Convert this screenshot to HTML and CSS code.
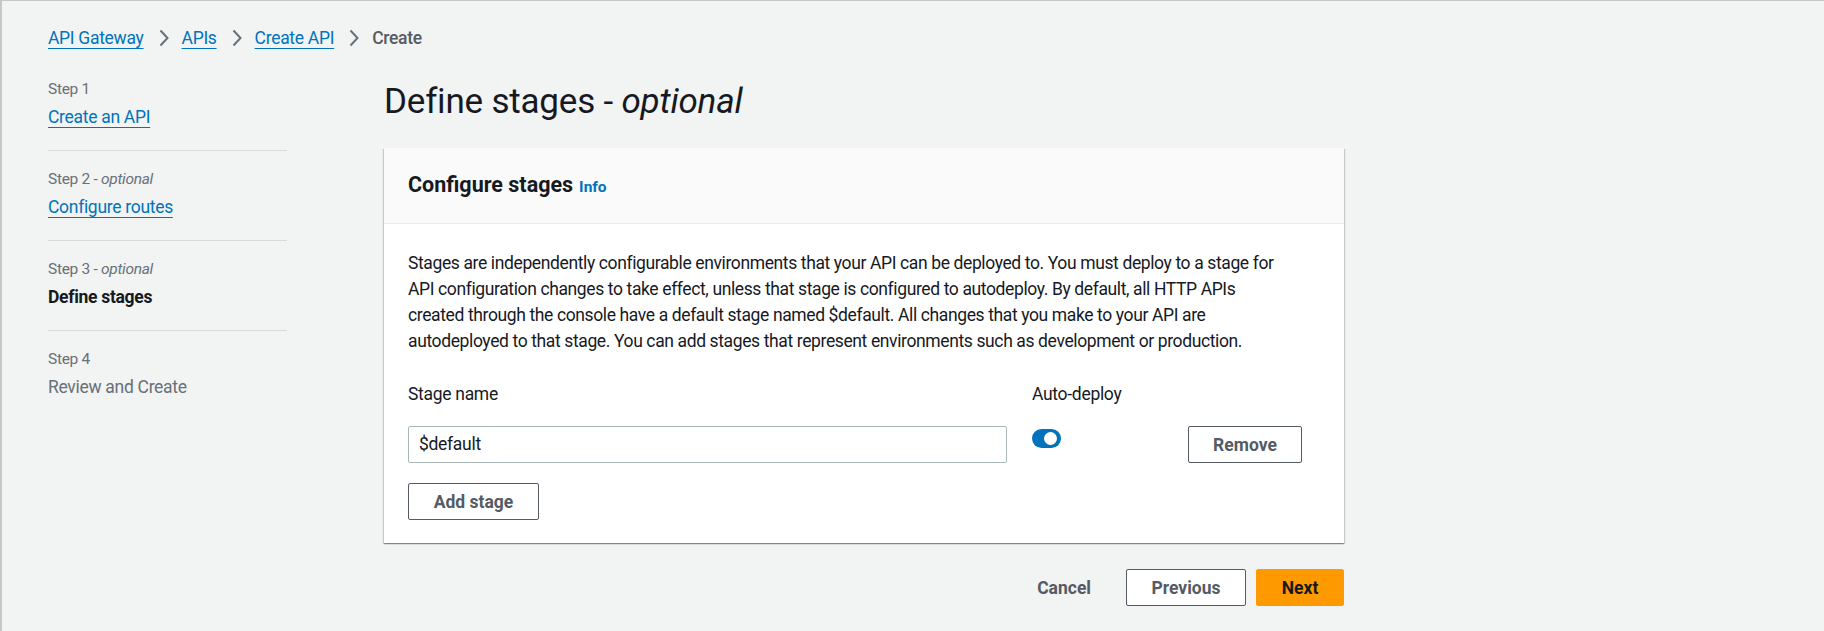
FILE: index.html
```html
<!DOCTYPE html>
<html lang="en">
<head>
<meta charset="utf-8">
<title>Define stages</title>
<link rel="stylesheet" href="styles.css">
</head>
<body>
<div class="page">
  <nav class="breadcrumbs">
    <a class="crumb-link" href="#">API Gateway</a>
    <svg class="chev" viewBox="0 0 10 18" width="10" height="18"><path d="M1.5 1.5l7 7.5-7 7.5" fill="none" stroke="#687078" stroke-width="2"/></svg>
    <a class="crumb-link" href="#">APIs</a>
    <svg class="chev" viewBox="0 0 10 18" width="10" height="18"><path d="M1.5 1.5l7 7.5-7 7.5" fill="none" stroke="#687078" stroke-width="2"/></svg>
    <a class="crumb-link" href="#">Create API</a>
    <svg class="chev" viewBox="0 0 10 18" width="10" height="18"><path d="M1.5 1.5l7 7.5-7 7.5" fill="none" stroke="#687078" stroke-width="2"/></svg>
    <span class="crumb-current">Create</span>
  </nav>

  <div class="layout">
    <ul class="steps">
      <li class="step">
        <div class="step-label">Step 1</div>
        <a class="step-link" href="#">Create an API</a>
      </li>
      <li class="step">
        <div class="step-label">Step 2 - <i>optional</i></div>
        <a class="step-link" href="#">Configure routes</a>
      </li>
      <li class="step">
        <div class="step-label">Step 3 - <i>optional</i></div>
        <span class="step-active">Define stages</span>
      </li>
      <li class="step step-last">
        <div class="step-label">Step 4</div>
        <span class="step-disabled">Review and Create</span>
      </li>
    </ul>

    <main class="main">
      <h1 class="title">Define stages - <i>optional</i></h1>

      <section class="card">
        <header class="card-header">
          <h2 class="card-title">Configure stages</h2>
          <a class="info" href="#">Info</a>
        </header>
        <div class="card-body">
          <p class="desc">Stages are independently configurable environments that your API can be deployed to. You must deploy to a stage for API configuration changes to take effect, unless that stage is configured to autodeploy. By default, all HTTP APIs created through the console have a default stage named $default. All changes that you make to your API are autodeployed to that stage. You can add stages that represent environments such as development or production.</p>

          <div class="stage-row">
            <div class="col-name">
              <label class="field-label">Stage name</label>
              <div class="input">$default</div>
            </div>
            <div class="col-deploy">
              <span class="field-label">Auto-deploy</span>
              <span class="toggle"><span class="knob"></span></span>
            </div>
            <div class="col-remove">
              <button class="btn">Remove</button>
            </div>
          </div>

          <button class="btn btn-add">Add stage</button>
        </div>
      </section>

      <div class="actions">
        <button class="btn-link">Cancel</button>
        <button class="btn btn-prev">Previous</button>
        <button class="btn btn-primary">Next</button>
      </div>
    </main>
  </div>
</div>
</body>
</html>
```

FILE: styles.css
```css
* { box-sizing: border-box; }

html, body {
  margin: 0;
  padding: 0;
}

body {
  background: #f2f3f3;
  font-family: Roboto, "Liberation Sans", sans-serif;
  font-size: 17.5px;
  line-height: 26px;
  color: #16191f;
  letter-spacing: -0.3px;
  border-top: 1px solid #c3c8c8;
  border-left: 2px solid #c3c8c8;
  height: 631px;
  overflow: hidden;
}

.page {
  padding: 24px 0 0 46px;
}

a { color: #0073bb; }

.breadcrumbs {
  display: flex;
  align-items: center;
  height: 26px;
}

.crumb-link {
  text-decoration: underline;
  text-underline-offset: 4px;
  text-decoration-thickness: 1px;
}

.chev {
  margin: 0 13px 0 15px;
  display: block;
}

.crumb-current {
  color: #545b64;
  font-weight: 500;
}

.layout {
  display: grid;
  grid-template-columns: 239px 960px;
  column-gap: 97px;
  margin-top: 10px;
}

.steps {
  list-style: none;
  margin: 0;
  padding: 0;
}

.step {
  padding: 17px 0 20px;
  border-bottom: 1px solid #d5dbdb;
}

.step-last { border-bottom: none; }

.step-label {
  font-size: 15.5px;
  line-height: 22px;
  color: #687078;
  margin-bottom: 4px;
}

.step-label i { font-style: italic; }

.step-link {
  display: inline-block;
  line-height: 26px;
  text-decoration: underline;
  text-underline-offset: 4px;
  text-decoration-thickness: 1px;
}

.step-active {
  display: block;
  font-weight: 700;
  color: #16191f;
}

.step-disabled {
  display: block;
  color: #687078;
}

.main { min-width: 0; }

.title {
  margin: 20px 0 26px;
  font-size: 35px;
  line-height: 41px;
  font-weight: 400;
  letter-spacing: -0.2px;
  color: #16191f;
}

.card {
  background: #fff;
  box-shadow: 0 1px 1px 0 rgba(0, 28, 36, 0.3), 1px 1px 1px 0 rgba(0, 28, 36, 0.15), -1px 1px 1px 0 rgba(0, 28, 36, 0.15);
}

.card-header {
  display: flex;
  align-items: baseline;
  gap: 6px;
  height: 76px;
  padding: 23px 24px 0;
  background: #fafafa;
  border-bottom: 1px solid #eaeded;
}

.card-title {
  margin: 0;
  font-size: 21.5px;
  line-height: 28px;
  font-weight: 700;
  letter-spacing: 0;
}

.info {
  font-size: 15.5px;
  font-weight: 700;
  letter-spacing: 0;
  text-decoration: none;
}

.card-body {
  padding: 26px 24px 23px;
}

.desc {
  margin: 0 0 27px;
  max-width: 884px;
  letter-spacing: -0.38px;
}

.stage-row {
  display: flex;
  align-items: flex-start;
}

.col-name {
  width: 599px;
  display: flex;
  flex-direction: column;
  gap: 19px;
}

.col-deploy {
  width: 156px;
  margin-left: 25px;
  display: flex;
  flex-direction: column;
  align-items: flex-start;
  gap: 22px;
}

.col-remove {
  padding-top: 45px;
}

.field-label {
  display: block;
  line-height: 26px;
}

.input {
  height: 37px;
  border: 1px solid #aab7b8;
  border-radius: 2px;
  padding: 0 10px;
  line-height: 35px;
  color: #16191f;
}

.toggle {
  display: block;
  width: 29px;
  height: 19px;
  border-radius: 10px;
  background: #0073bb;
  position: relative;
}

.knob {
  position: absolute;
  top: 3px;
  right: 4px;
  width: 13px;
  height: 13px;
  border-radius: 50%;
  background: #fff;
}

.btn {
  font-family: inherit;
  font-size: 17.5px;
  font-weight: 700;
  letter-spacing: 0;
  color: #545b64;
  background: #fff;
  border: 1px solid #545b64;
  border-radius: 2px;
  height: 37px;
  padding: 0 20px;
  cursor: pointer;
}

.col-remove .btn { width: 114px; }

.btn-add {
  margin-top: 20px;
  width: 131px;
}

.actions {
  display: flex;
  justify-content: flex-end;
  align-items: center;
  gap: 10px;
  margin-top: 26px;
}

.btn-link {
  font-family: inherit;
  font-size: 17.5px;
  font-weight: 700;
  letter-spacing: 0;
  color: #545b64;
  background: none;
  border: none;
  height: 37px;
  padding: 0 25px 0 20px;
}

.btn-prev { width: 120px; }

.btn-primary {
  width: 88px;
  background: #ff9900;
  border-color: #ff9900;
  color: #16191f;
}
```
